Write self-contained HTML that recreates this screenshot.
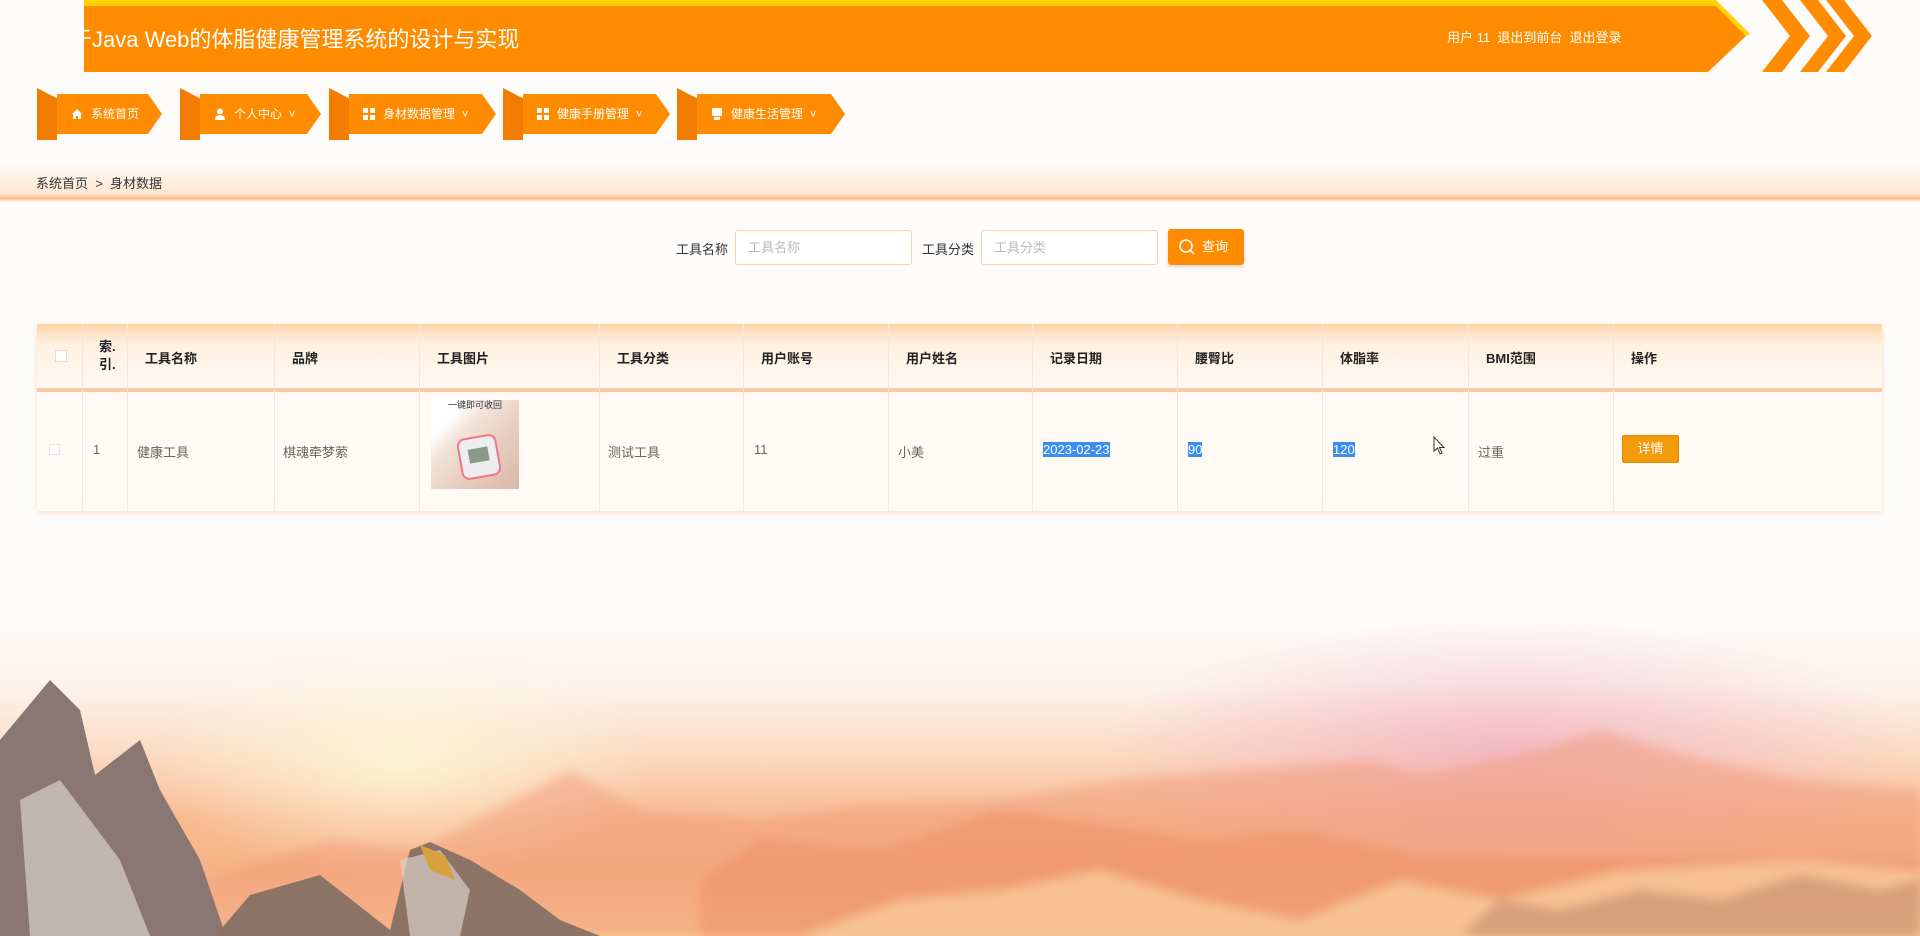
<!DOCTYPE html>
<html><head><meta charset="utf-8"><style>
*{margin:0;padding:0;box-sizing:border-box}
body{width:1920px;height:936px;overflow:hidden;position:relative;font-family:"Liberation Sans","Noto Sans CJK SC",sans-serif;background:#fdfcfb}
.abs{position:absolute}
.hdr{left:84px;top:0;width:1662px;height:72px;background:#ff8c00;overflow:hidden;clip-path:polygon(0 0,1628px 0,1662px 36px,1624px 72px,0 72px)}
.hdr:before{content:"";position:absolute;left:0;top:0;right:0;height:6px;background:#ffd200}
.title{left:-14px;top:22px;color:#fff;font-size:22px;white-space:nowrap}
.user{left:1363px;top:27px;color:#fff;font-size:13px;white-space:nowrap}
.nav{top:88px;height:52px}
.nav .flap{position:absolute;left:0;top:0;width:20px;height:52px;background:#f27c00;clip-path:polygon(0 0,100% 20%,100% 100%,0 100%)}
.nav .body{position:absolute;left:20px;top:6px;height:40px;background:#ff8c00;clip-path:polygon(0 0,calc(100% - 14px) 0,100% 50%,calc(100% - 14px) 100%,0 100%);color:#fff;font-size:12px;line-height:40px;padding-left:34px;white-space:nowrap}
.nav .ic{position:absolute;left:14px;top:14px;width:12px;height:12px}
.crumb{left:36px;top:173px;font-size:13px;color:#333}
.topband{left:0;top:160px;width:1920px;height:42px;background:linear-gradient(#fdfcfb,#fde8d2 80%,#fbbf86 92%,#fdfcfb)}
.lab{font-size:13px;color:#333;top:239px}
.inp{top:230px;height:35px;background:#fff;border:1px solid #f3d3b3;border-radius:3px;font-size:13px;color:#bbb;padding-left:12px;line-height:33px}
.btn{left:1168px;top:229px;width:76px;height:36px;background:#ff8c00;border-radius:3px;color:#fff;font-size:13px;line-height:36px;padding-left:34px;box-shadow:0 2px 4px rgba(0,0,0,.15)}
.tbl{left:37px;top:324px;width:1845px;height:187px;background:#fffaf4;box-shadow:0 2px 6px rgba(240,170,110,.35)}
.th{position:absolute;top:0;height:64px;background:linear-gradient(#fdd3a8 0,#fff0e0 30%,#fffaf3 100%);width:100%}
.sep{position:absolute;top:64px;height:4px;width:100%;background:#f8c9a6}
.col{position:absolute;top:0;height:187px;border-left:1px solid #f5e6d6}
.h{position:absolute;top:24px;font-size:13px;font-weight:bold;color:#222;white-space:nowrap}
.d{position:absolute;top:118px;font-size:13px;color:#666;white-space:nowrap}
.sel{background:#3b8ef0;color:#fff}
</style></head><body>
<!-- landscape -->
<div class="abs" style="left:0;top:600px;width:1920px;height:336px;background:linear-gradient(180deg,#fdfcfb 0%,#fdf4ee 25%,#fbdcc4 45%,#f8bb92 65%,#f6b386 80%,#f8c795 100%)"></div>
<div class="abs" style="left:1100px;top:620px;width:820px;height:260px;background:radial-gradient(closest-side,rgba(235,150,190,.5),rgba(235,150,190,0))"></div>
<div class="abs" style="left:150px;top:640px;width:500px;height:240px;background:radial-gradient(closest-side,rgba(255,250,220,.8),rgba(255,240,200,0))"></div>
<svg class="abs" style="left:0;top:600px;filter:blur(5px)" width="1920" height="336">
<path d="M200 280 L330 240 L420 250 L570 170 L640 210 L760 220 L860 205 L1000 200 L1120 180 L1250 170 L1370 160 L1420 175 L1540 150 L1600 130 L1700 160 L1800 180 L1920 190 L1920 336 L200 336Z" fill="#f09a78" opacity=".45"/>
<path d="M700 280 L760 240 L880 250 L1000 210 L1100 225 L1200 240 L1300 230 L1420 255 L1920 260 L1920 336 L700 336Z" fill="#ec8a62" opacity=".45"/>
<path d="M800 336 L900 300 L1000 290 L1100 270 L1200 300 L1300 320 L1400 280 L1500 300 L1620 270 L1800 260 L1920 270 L1920 336Z" fill="#f9c99c" opacity=".8"/>
<path d="M1460 336 L1500 300 L1560 310 L1640 290 L1720 300 L1800 275 L1880 290 L1920 280 L1920 336Z" fill="#b78262" opacity=".5"/>
</svg>
<svg class="abs" style="left:0;top:600px" width="1920" height="336">
<path d="M0 140 L50 80 L80 110 L95 175 L140 140 L160 190 L200 260 L226 336 L0 336Z" fill="#8a7672"/>
<path d="M20 200 L60 180 L120 260 L150 336 L30 336Z" fill="#d8d0cc" opacity=".7"/>
<path d="M215 336 L250 295 L320 275 L390 330 L410 250 L430 242 L470 260 L520 290 L560 320 L600 336Z" fill="#8b7466"/>
<path d="M400 260 L440 250 L470 290 L460 336 L410 336Z" fill="#d9cfc6" opacity=".7"/>
<path d="M420 245 L445 255 L455 280 L430 270Z" fill="#d9a040"/>
</svg>
<!-- header -->
<div class="abs hdr"><div class="abs title">于Java Web的体脂健康管理系统的设计与实现</div><div class="abs user">用户 11&nbsp; 退出到前台&nbsp; 退出登录</div></div>
<svg class="abs" style="left:1700px;top:0" width="220" height="72">
<polygon points="10,0 16,0 50,34 46,36 " fill="#ffd200"/>
<polygon points="62,0 82,0 110,36 82,72 62,72 90,36" fill="#ff8c00"/>
<polygon points="100,0 118,0 146,36 118,72 100,72 128,36" fill="#ff8c00"/>
<polygon points="126,0 144,0 172,36 144,72 126,72 154,36" fill="#ff8c00"/>
</svg>
<!-- nav -->
<div class="abs nav" style="left:37px;width:125px"><div class="flap"></div><div class="body" style="width:105px"><svg class="ic" viewBox="0 0 12 12"><path d="M6 1 L11 6 L10 6 L10 11 L7 11 L7 8 L5 8 L5 11 L2 11 L2 6 L1 6Z" fill="#fff"/></svg>系统首页</div></div>
<div class="abs nav" style="left:180px;width:141px"><div class="flap"></div><div class="body" style="width:121px"><svg class="ic" viewBox="0 0 12 12"><circle cx="6" cy="3.5" r="3" fill="#fff"/><path d="M1 12 Q1 7 6 7 Q11 7 11 12Z" fill="#fff"/></svg>个人中心 &nbsp;˅</div></div>
<div class="abs nav" style="left:329px;width:167px"><div class="flap"></div><div class="body" style="width:147px"><svg class="ic" viewBox="0 0 12 12" fill="#fff"><rect width="5" height="5"/><rect x="7" width="5" height="5"/><rect y="7" width="5" height="5"/><rect x="7" y="7" width="5" height="5"/></svg>身材数据管理 &nbsp;˅</div></div>
<div class="abs nav" style="left:503px;width:167px"><div class="flap"></div><div class="body" style="width:147px"><svg class="ic" viewBox="0 0 12 12" fill="#fff"><rect width="5" height="5"/><rect x="7" width="5" height="5"/><rect y="7" width="5" height="5"/><rect x="7" y="7" width="5" height="5"/></svg>健康手册管理 &nbsp;˅</div></div>
<div class="abs nav" style="left:677px;width:168px"><div class="flap"></div><div class="body" style="width:148px"><svg class="ic" viewBox="0 0 12 12" fill="#fff"><rect x="1" width="10" height="8" rx="1"/><rect x="3" y="9" width="6" height="3"/></svg>健康生活管理 &nbsp;˅</div></div>
<div class="abs topband"></div>
<div class="abs crumb">系统首页 &nbsp;&gt;&nbsp; 身材数据</div>
<!-- search -->
<div class="abs lab" style="left:676px">工具名称</div>
<div class="abs inp" style="left:735px;width:177px">工具名称</div>
<div class="abs lab" style="left:922px">工具分类</div>
<div class="abs inp" style="left:981px;width:177px">工具分类</div>
<div class="abs btn"><svg style="position:absolute;left:10px;top:9px" width="18" height="18" viewBox="0 0 18 18"><circle cx="8" cy="8" r="6" stroke="#fff" stroke-width="1.6" fill="none"/><path d="M12.5 12.5 L16 16" stroke="#fff" stroke-width="1.6"/></svg>查询</div>
<!-- table -->
<div class="abs tbl">
<div class="th"></div><div class="sep"></div>
<div class="col" style="left:45px"></div><div class="col" style="left:90px"></div><div class="col" style="left:237px"></div><div class="col" style="left:382px"></div><div class="col" style="left:562px"></div><div class="col" style="left:706px"></div><div class="col" style="left:851px"></div><div class="col" style="left:995px"></div><div class="col" style="left:1140px"></div><div class="col" style="left:1285px"></div><div class="col" style="left:1431px"></div><div class="col" style="left:1576px"></div>
<div style="position:absolute;left:18px;top:26px;width:12px;height:12px;background:#fff;border:1px solid #ddd"></div>
<div class="h" style="left:62px;top:14px;line-height:18px">索.<br>引.</div>
<div class="h" style="left:108px">工具名称</div>
<div class="h" style="left:255px">品牌</div>
<div class="h" style="left:400px">工具图片</div>
<div class="h" style="left:580px">工具分类</div>
<div class="h" style="left:724px">用户账号</div>
<div class="h" style="left:869px">用户姓名</div>
<div class="h" style="left:1013px">记录日期</div>
<div class="h" style="left:1158px">腰臀比</div>
<div class="h" style="left:1303px">体脂率</div>
<div class="h" style="left:1449px">BMI范围</div>
<div class="h" style="left:1594px">操作</div>
<div style="position:absolute;left:12px;top:120px;width:11px;height:11px;background:#fff;border:1px solid #e5e5e5"></div>
<div class="d" style="left:56px">1</div>
<div class="d" style="left:100px">健康工具</div>
<div class="d" style="left:246px">棋魂牵梦萦</div>
<div style="position:absolute;left:394px;top:76px;width:88px;height:89px;background:linear-gradient(135deg,#fff 0,#fff 20%,#f2e4dc 35%,#e9cfc0 60%,#d9b8a6 100%)"><div style="font-size:9px;color:#333;text-align:center;margin-top:-2px">一键即可收回</div><div style="position:absolute;left:28px;top:36px;width:40px;height:42px;background:#eee;border-radius:8px;border:2px solid #e78;transform:rotate(-10deg)"><div style="margin:10px 8px;width:20px;height:14px;background:#8a9a88"></div></div></div>
<div class="d" style="left:571px">测试工具</div>
<div class="d" style="left:717px">11</div>
<div class="d" style="left:861px">小美</div>
<div class="d sel" style="left:1006px">2023-02-23</div>
<div class="d sel" style="left:1151px">90</div>
<div class="d sel" style="left:1296px">120</div>
<div class="d" style="left:1441px">过重</div>
<div style="position:absolute;left:1585px;top:111px;width:57px;height:28px;background:#f29a0a;border:1px solid #e08a00;border-radius:2px;color:#fff;font-size:13px;line-height:26px;text-align:center">详情</div>
</div>
<svg class="abs" style="left:1433px;top:436px" width="14" height="20"><path d="M1 1 L1 15 L4.5 12 L7 18 L9 17 L6.5 11.5 L11 11.5Z" fill="#fff" stroke="#333" stroke-width="1"/></svg>
</body></html>
